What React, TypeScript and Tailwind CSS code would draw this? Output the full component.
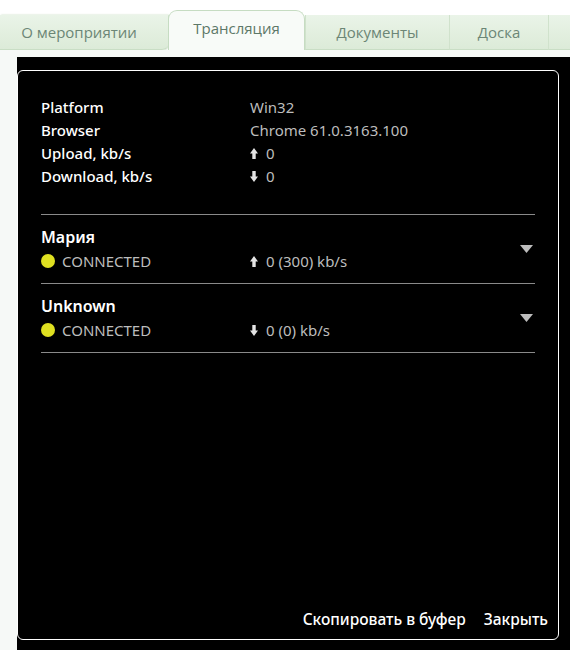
import React from 'react';

const tabs = [
  { label: 'О мероприятии', w: 'w-[168px]' },
  { label: 'Трансляция', w: 'w-[137px]', active: true },
  { label: 'Документы', w: 'w-[144px]' },
  { label: 'Доска', w: 'w-[99px]' },
  { label: '', w: 'flex-1' },
];

const info = [
  { label: 'Platform', value: 'Win32' },
  { label: 'Browser', value: 'Chrome 61.0.3163.100' },
  { label: 'Upload, kb/s', value: '0', dir: 'up' as const },
  { label: 'Download, kb/s', value: '0', dir: 'down' as const },
];

const peers = [
  { name: 'Мария', dir: 'up' as const, rate: '0 (300) kb/s' },
  { name: 'Unknown', dir: 'down' as const, rate: '0 (0) kb/s' },
];

function Arrow({ dir }: { dir: 'up' | 'down' }) {
  return (
    <svg width="8" height="11" viewBox="0 0 8 11" className={dir === 'down' ? 'rotate-180' : ''}>
      <path d="M4 0 L8 5.5 L5.7 5.5 L5.7 11 L2.3 11 L2.3 5.5 L0 5.5 Z" fill="#e4e4e4" />
    </svg>
  );
}

function App() {
  return (
    <div className="w-[570px] h-[650px] bg-white overflow-hidden flex flex-col">
      <div className="h-[10px]" />

      {/* Tabs */}
      <div className="flex items-end h-[40px] font-['Open_Sans',sans-serif] text-[15px]">
        {tabs.map((t, i) =>
          t.active ? (
            <div
              key={i}
              className={`${t.w} h-[40px] bg-[#f8fbf8] border border-b-0 border-[#c6dcc2] rounded-t-[9px] flex items-start justify-center pt-[6px] text-[#5d7868]`}
            >
              {t.label}
            </div>
          ) : (
            <div
              key={i}
              className={`${t.w} h-[35px] bg-gradient-to-b from-[#eaf4e8] to-[#dcebd8] border-b border-[#c9dec5] ${i > 1 ? 'border-l border-l-[#d0e2cc]' : ''} ${i === 0 ? 'rounded-br-[6px] shadow-[1px_0_2px_#b9d3b4] pr-[10px]' : ''} flex items-center justify-center text-[#6c8676]`}
            >
              {t.label}
            </div>
          )
        )}
      </div>

      {/* Content */}
      <div className="flex-1 bg-[#f6f9f7] pt-[7px] pl-[17px] flex">
        <div className="flex-1 bg-black pt-[13px] font-['Noto_Sans',sans-serif] text-[15px]">
          <div className="w-[542px] h-[570px] border border-white rounded-[6px] flex flex-col pt-[25px] px-[23px] pb-[8px]">
            <div className="flex flex-col">
              {info.map(r => (
                <div key={r.label} className="flex h-[23px] items-center">
                  <div className="w-[209px] text-white font-medium">{r.label}</div>
                  <div className="flex items-center gap-[8px] text-[#bdbdbd]">
                    {r.dir && <Arrow dir={r.dir} />}
                    <span>{r.value}</span>
                  </div>
                </div>
              ))}
            </div>

            <div className="mt-[26px] border-t border-[#8a8a8a]">
              {peers.map(p => (
                <div key={p.name} className="border-b border-[#8a8a8a] h-[69px] flex items-start pt-[11px]">
                  <div className="flex-1">
                    <div className="text-white font-semibold text-[16px] leading-[22px]">{p.name}</div>
                    <div className="flex items-center h-[26px]">
                      <div className="w-[209px] flex items-center gap-[7px] text-[#bdbdbd]">
                        <span className="w-[14px] h-[14px] rounded-full bg-[#dfe021]" />
                        <span>CONNECTED</span>
                      </div>
                      <div className="flex items-center gap-[8px] text-[#bdbdbd]">
                        <Arrow dir={p.dir} />
                        <span>{p.rate}</span>
                      </div>
                    </div>
                  </div>
                  <svg width="13" height="8" viewBox="0 0 13 8" className="mt-[19px] mr-[2px]">
                    <path d="M0 0 L13 0 L6.5 8 Z" fill="#bdbdbd" />
                  </svg>
                </div>
              ))}
            </div>

            <div className="mt-auto flex justify-end gap-[18px] text-white font-medium text-[15.5px] -mr-[13px]">
              <button>Скопировать в буфер</button>
              <button>Закрыть</button>
            </div>
          </div>
        </div>
      </div>
    </div>
  );
}

export default App;
